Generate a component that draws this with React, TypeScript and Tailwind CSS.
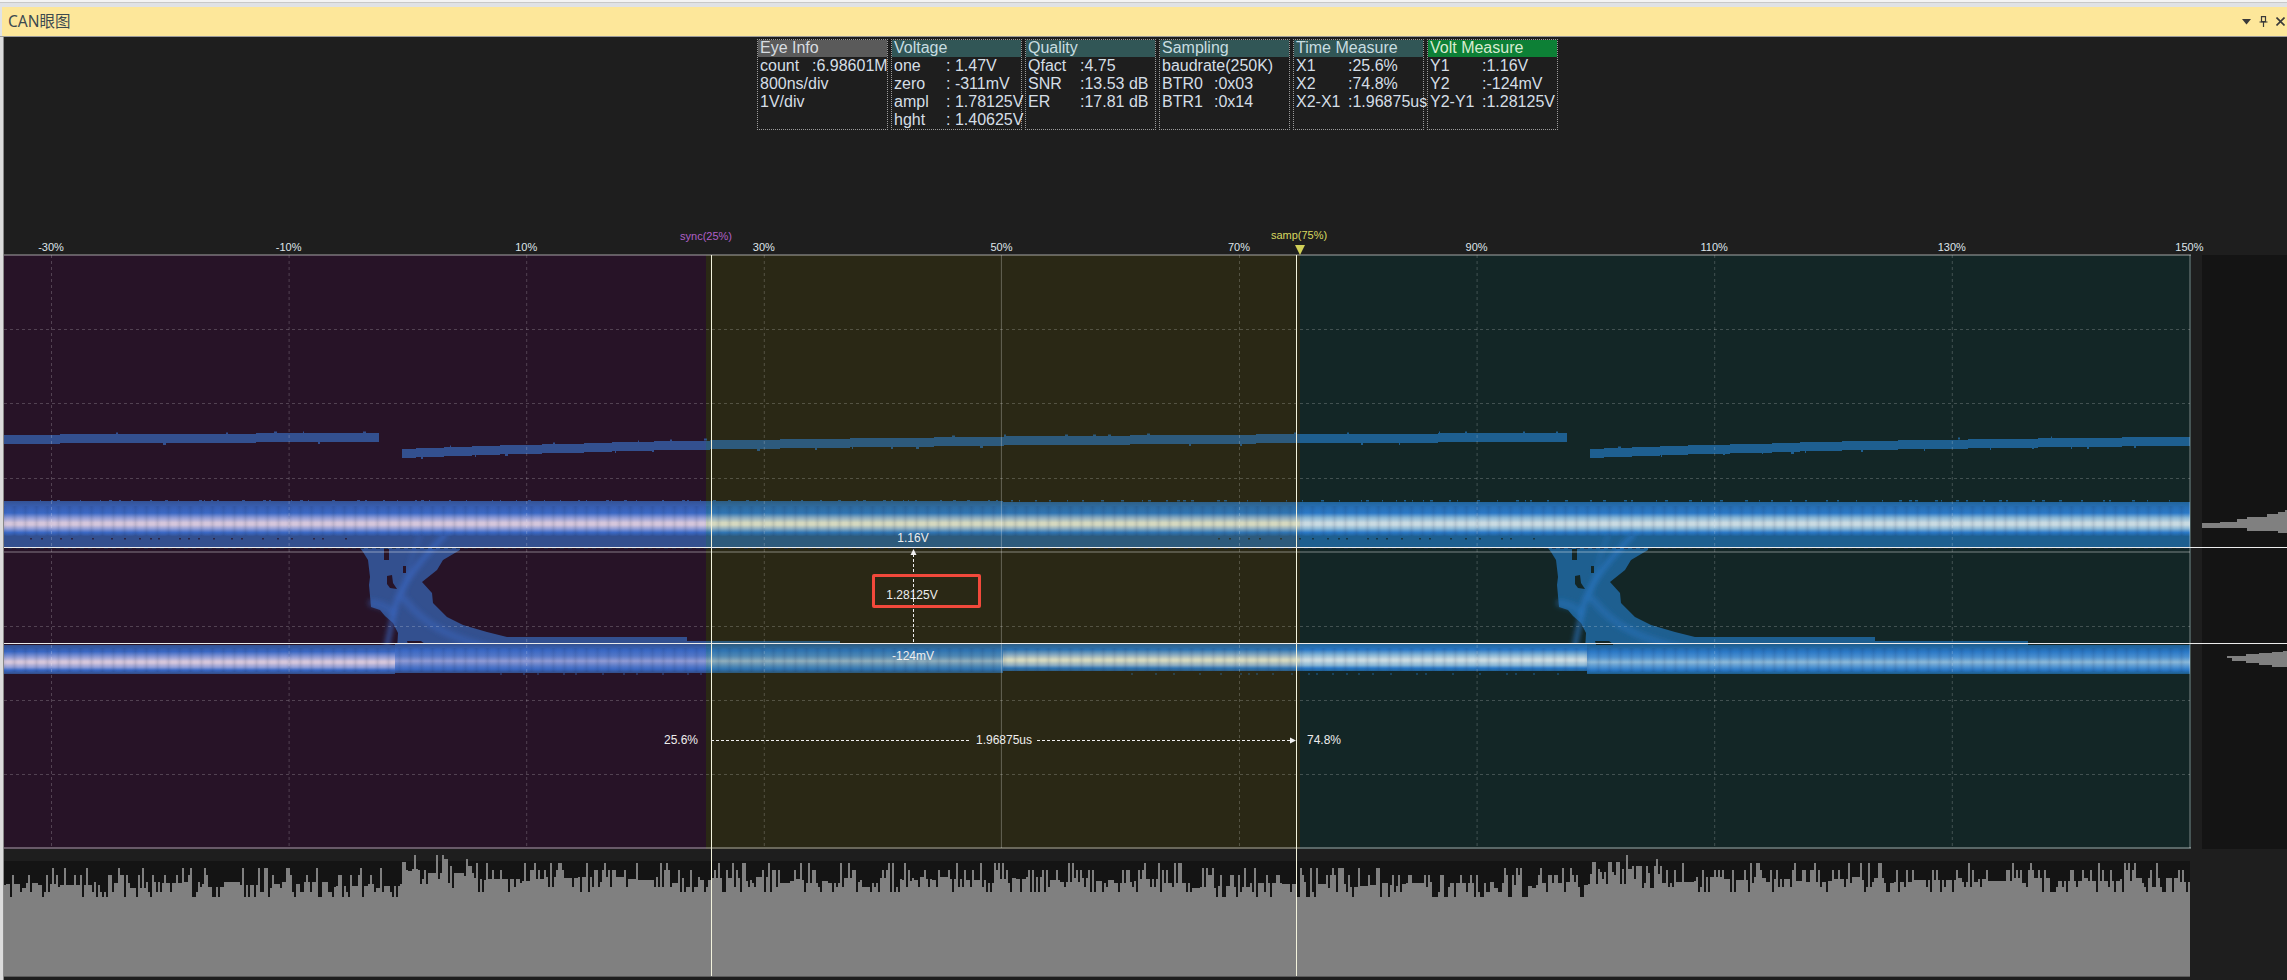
import React from "react";

type Row = [string, string] | [string];
type Box = { title: string; head: string; titleColor: string; rows: Row[] };

const boxes: Box[] = [
  {
    title: "Eye Info",
    head: "bg-[#5a5a5a]",
    titleColor: "text-[#d8dde0]",
    rows: [["count", ":6.98601M"], ["800ns/div"], ["1V/div"]],
  },
  {
    title: "Voltage",
    head: "bg-[#315656]",
    titleColor: "text-[#c8dde0]",
    rows: [["one", ": 1.47V"], ["zero", ": -311mV"], ["ampl", ": 1.78125V"], ["hght", ": 1.40625V"]],
  },
  {
    title: "Quality",
    head: "bg-[#315656]",
    titleColor: "text-[#c8dde0]",
    rows: [["Qfact", ":4.75"], ["SNR", ":13.53 dB"], ["ER", ":17.81 dB"]],
  },
  {
    title: "Sampling",
    head: "bg-[#315656]",
    titleColor: "text-[#c8dde0]",
    rows: [["baudrate(250K)"], ["BTR0", ":0x03"], ["BTR1", ":0x14"]],
  },
  {
    title: "Time Measure",
    head: "bg-[#315656]",
    titleColor: "text-[#c8dde0]",
    rows: [["X1", ":25.6%"], ["X2", ":74.8%"], ["X2-X1", ":1.96875us"]],
  },
  {
    title: "Volt Measure",
    head: "bg-[#0d8036]",
    titleColor: "text-[#d8ecd0]",
    rows: [["Y1", ":1.16V"], ["Y2", ":-124mV"], ["Y2-Y1", ":1.28125V"]],
  },
];

const ruler = [-30, -10, 10, 30, 50, 70, 90, 110, 130, 150];
const pctX = (p: number) => 51 + (p + 30) * 11.88;

// small seeded generator so the noise stays the same on every render
function seeded(seed: number) {
  let s = seed;
  return () => {
    s = (s * 1664525 + 1013904223) % 4294967296;
    return s / 4294967296;
  };
}

const PERIOD = 1188;

const centerTable: [number, number][] = [
  [402, 454], [480, 451], [570, 448.5], [665, 446], [800, 444], [1002, 441.5], [1192, 440], [1300, 439], [1567, 438],
];

function centerAt(p: number) {
  for (let i = 1; i < centerTable.length; i++) {
    const [x0, y0] = centerTable[i - 1];
    const [x1, y1] = centerTable[i];
    if (p <= x1) return y0 + ((p - x0) / (x1 - x0)) * (y1 - y0);
  }
  return 438;
}

function tracePath(x0: number, x1: number, offset: number) {
  const top: string[] = [];
  const bottom: string[] = [];
  for (let x = x0; x < x1; x += 14) {
    const next = Math.min(x + 14, x1);
    const c = Math.round(centerAt(x + offset));
    top.push(`${x},${c - 5} ${next},${c - 5}`);
    bottom.unshift(`${next},${c + 4} ${x},${c + 4}`);
  }
  return `M${top.join(" ")} ${bottom.join(" ")}Z`;
}

const traceD = [tracePath(4, 379, PERIOD), tracePath(402, 1567, 0), tracePath(402 + PERIOD, 2190, -PERIOD)].join(" ");

const ticks = (() => {
  const r = seeded(11);
  const out: { x: number; y: number; w: number; h: number }[] = [];
  // upper band top edge
  for (let x = 40; x < 2185; x += 5 + Math.floor(r() * 22)) out.push({ x, y: 500, w: 1 + Math.floor(r() * 3), h: 1.5 });
  // trace noise
  for (let x = 116; x < 2180; x += 14 + Math.floor(r() * 50)) {
    const inGap = x > 379 && x < 402;
    if (inGap || (x > 1567 && x < 1591)) continue;
    const p = x > 1590 ? x - PERIOD : x < 379 ? x + PERIOD : x;
    const c = Math.round(centerAt(p));
    out.push({ x, y: r() > 0.5 ? c - 6.5 : c + 4, w: 1 + Math.floor(r() * 3), h: 2 });
  }
  // lower band bottom edge
  for (let x = 500; x < 1560; x += 8 + Math.floor(r() * 20)) {
    if (x > 700 && x < 1120) continue;
    out.push({ x, y: 673.5, w: 2, h: 1 });
  }
  return out;
})();

const dots = (() => {
  const r = seeded(5);
  const out: number[] = [];
  for (let x = 30; x < 350; x += 8 + Math.floor(r() * 16)) out.push(x);
  return out;
})();

const histPath = (() => {
  const r = seeded(47);
  let d = "M4,976 ";
  let level = 0;
  for (let x = 4; x < 2190; x += 2) {
    const phase = (x - 4) % PERIOD;
    const base = phase < 396 ? 885 : phase < 440 ? 872 : phase < 470 ? 876 : 880;
    if (r() < 0.25) level = Math.floor(r() * 7) - 3;
    const v = r();
    // a scalloped body, with thin spikes up and thin notches down
    const top = v < 0.1 ? base - 17 : v < 0.24 ? base - 10 : v < 0.35 ? base + 7 : v < 0.47 ? base + 12 : base + level;
    d += `L${x},${top} L${x + 2},${top} `;
  }
  return d + "L2190,976Z";
})();

const eyeShape =
  "M360,548 L363,552 L368,560 L370,577 L369,585 L371,607 L380,610 L385,616 L393,623 L398,633 L397,650 L840,650 L840,641 L687,641 L687,637 L507,637 L487,632 L463,625 L447,617 L433,603 L432,593 L422,582 L437,570 L443,560 L460,550 L460,548Z";

type Palette = {
  id: string;
  bg: string;
  outer: string;
  mid: string;
  light: string;
  inner: string;
  lightDim: string;
  innerDim: string;
  clipX: number;
  clipW: number;
};

const palettes: Palette[] = [
  { id: "p", bg: "#271327", outer: "#33508f", mid: "#3a68c4", light: "#8f9cd6", inner: "#d4c6dc", lightDim: "#5578c8", innerDim: "#8f9ad4", clipX: 4, clipW: 702 },
  { id: "y", bg: "#2a2815", outer: "#2d5a7c", mid: "#2f74b2", light: "#8cacc0", inner: "#d4d8c0", lightDim: "#4f88b4", innerDim: "#90aebc", clipX: 706, clipW: 594 },
  { id: "t", bg: "#132626", outer: "#1e5f90", mid: "#2a78c6", light: "#88b6d6", inner: "#c8dae2", lightDim: "#4b90d0", innerDim: "#8ab8d8", clipX: 1300, clipW: 890 },
];

function EyeBlob({ p, dx }: { p: Palette; dx: number }) {
  return (
    <g transform={`translate(${dx},0)`}>
      <path d={eyeShape} fill={p.outer} />
      <g fill="none" stroke={p.mid} strokeLinecap="round" filter="url(#soft)">
        <path d="M445,535 C420,560 405,580 397,600 C392,620 388,640 384,660" strokeWidth="5" opacity="0.7" />
        <path d="M420,535 C410,560 405,580 402,600" strokeWidth="4" opacity="0.35" />
        <path d="M405,600 C425,625 450,640 510,652" strokeWidth="7" opacity="0.45" />
        <path d="M372,603 Q385,605 392,612" strokeWidth="8" opacity="0.4" />
      </g>
      <path d="M387,576 L392,575 L393,583 L397,589 L390,588 L387,584Z" fill={p.bg} />
      <path d="M403,566 h3 v7 h-3z" fill={p.bg} />
      <path d="M384,549 h5 v11 h-5z" fill={p.bg} />
      <path d="M407,641 h14 l4,3 v4 h-16z" fill={p.bg} />
      {dots.map((x) => (
        <rect key={x} x={x} y="538" width="2" height="1.5" fill={p.bg} opacity="0.7" />
      ))}
    </g>
  );
}

function EyeLayer({ p }: { p: Palette }) {
  const upper = `upper-${p.id}`;
  const lower = `lower-${p.id}`;
  const dim = `dim-${p.id}`;
  return (
    <g clipPath={`url(#clip-${p.id})`}>
      <defs>
        <linearGradient id={upper} gradientUnits="userSpaceOnUse" x1="0" y1="500" x2="0" y2="548">
          <stop offset="0" stopColor={p.outer} />
          <stop offset="0.16" stopColor={p.mid} stopOpacity="0.9" />
          <stop offset="0.27" stopColor={p.mid} />
          <stop offset="0.37" stopColor={p.light} />
          <stop offset="0.47" stopColor={p.inner} />
          <stop offset="0.52" stopColor={p.inner} />
          <stop offset="0.6" stopColor={p.light} />
          <stop offset="0.68" stopColor={p.mid} />
          <stop offset="0.76" stopColor={p.outer} />
          <stop offset="1" stopColor={p.outer} />
        </linearGradient>
        <linearGradient id={lower} gradientUnits="userSpaceOnUse" x1="0" y1="645" x2="0" y2="675">
          <stop offset="0" stopColor={p.outer} />
          <stop offset="0.22" stopColor={p.mid} />
          <stop offset="0.4" stopColor={p.light} />
          <stop offset="0.54" stopColor={p.inner} />
          <stop offset="0.6" stopColor={p.inner} />
          <stop offset="0.74" stopColor={p.light} />
          <stop offset="0.84" stopColor={p.mid} />
          <stop offset="0.95" stopColor={p.outer} />
        </linearGradient>
        <linearGradient id={dim} gradientUnits="userSpaceOnUse" x1="0" y1="645" x2="0" y2="675">
          <stop offset="0" stopColor={p.outer} />
          <stop offset="0.22" stopColor={p.mid} />
          <stop offset="0.4" stopColor={p.lightDim} />
          <stop offset="0.57" stopColor={p.innerDim} />
          <stop offset="0.74" stopColor={p.lightDim} />
          <stop offset="0.84" stopColor={p.mid} />
          <stop offset="0.95" stopColor={p.outer} />
        </linearGradient>
      </defs>

      <path d={traceD} fill={p.outer} />
      {ticks.map((t, i) => (
        <rect key={i} x={t.x} y={t.y} width={t.w} height={t.h} fill={p.outer} />
      ))}

      <rect x="4" y="501" width="999" height="47" fill={`url(#${upper})`} />
      <rect x="1003" y="502" width="1187" height="46" fill={`url(#${upper})`} />

      <EyeBlob p={p} dx={0} />
      <EyeBlob p={p} dx={PERIOD} />

      <rect x="4" y="645" width="391" height="29" fill={`url(#${lower})`} />
      <rect x="395" y="645" width="608" height="29" fill={`url(#${dim})`} transform="translate(0,-1)" />
      <rect x="1003" y="645" width="584" height="28" fill={`url(#${lower})`} transform="translate(0,-2)" />
      <rect x="1587" y="645" width="603" height="29" fill={`url(#${dim})`} />

      <rect x="4" y="506" width="2186" height="30" fill="url(#streaks)" />
      <rect x="4" y="648" width="2186" height="24" fill="url(#streaks)" />
      {/* dark dashes under the upper band */}
      <rect x="4" y="547" width="2186" height="2" fill="url(#dashes)" />
    </g>
  );
}

function ChartOverlay() {
  const vGrid = ruler.slice(0, 9).map(pctX);
  const hGrid = [329, 403, 478, 626, 700, 774];
  return (
    <svg className="absolute top-0 left-0 pointer-events-none" width={2287} height={980} viewBox="0 0 2287 980">
      <defs>
        <filter id="soft" x="-20%" y="-20%" width="140%" height="140%">
          <feGaussianBlur stdDeviation="2.5" />
        </filter>
        <linearGradient id="streakFill" x1="0" y1="0" x2="1" y2="0">
          <stop offset="0" stopColor="#10204a" stopOpacity="0" />
          <stop offset="0.5" stopColor="#10204a" stopOpacity="0.1" />
          <stop offset="1" stopColor="#10204a" stopOpacity="0" />
        </linearGradient>
        <pattern id="streaks" patternUnits="userSpaceOnUse" width="11" height="40">
          <rect x="0" y="0" width="7" height="40" fill="url(#streakFill)" />
        </pattern>
        <pattern id="dashes" patternUnits="userSpaceOnUse" width="8" height="2">
          <rect x="0" y="0" width="4" height="2" fill="#1a2a44" opacity="0.7" />
        </pattern>
        {palettes.map((p) => (
          <clipPath key={p.id} id={`clip-${p.id}`}>
            <rect x={p.clipX} y="255" width={p.clipW} height="593" />
          </clipPath>
        ))}
      </defs>

      {palettes.map((p) => (
        <EyeLayer key={p.id} p={p} />
      ))}

      {/* grid */}
      {vGrid.map((x) =>
        x === pctX(50) ? (
          <line key={x} x1={x} y1="255" x2={x} y2="848" stroke="#fff" strokeOpacity="0.28" />
        ) : (
          <line key={x} x1={x + 0.5} y1="255" x2={x + 0.5} y2="848" stroke="#fff" strokeOpacity="0.2" strokeDasharray="3 3" />
        ),
      )}
      {hGrid.map((y) => (
        <line key={y} x1="4" y1={y + 0.5} x2="2190" y2={y + 0.5} stroke="#fff" strokeOpacity="0.2" strokeDasharray="3 3" />
      ))}
      <line x1="4" y1="552" x2="2190" y2="552" stroke="#fff" strokeOpacity="0.22" strokeWidth="2" />

      {/* plot frame */}
      <line x1="4" y1="255" x2="2191" y2="255" stroke="#fff" strokeOpacity="0.3" strokeWidth="2" />
      <line x1="4" y1="848" x2="2191" y2="848" stroke="#fff" strokeOpacity="0.3" strokeWidth="2" />
      <line x1="2190" y1="255" x2="2190" y2="848" stroke="#fff" strokeOpacity="0.22" strokeWidth="2" />

      {/* bottom histogram */}
      <path d={histPath} fill="#808080" />
      <line x1="4" y1="976.5" x2="2190" y2="976.5" stroke="#5c5c5c" />

      {/* side histogram */}
      <path
        d="M2202,523 H2220 V522 H2237 V519 H2247 V517 H2267 V514 H2278 V512 H2285 V510 H2287 V533 H2278 V531 H2247 V528 H2202Z"
        fill="#808080"
      />
      <path
        d="M2227,656 H2246 V654 H2259 V653 H2272 V652 H2283 V651 H2287 V667 H2272 V665 H2259 V663 H2246 V661 H2232 V658 H2227Z"
        fill="#808080"
      />

      {/* cursors */}
      <line x1="711.5" y1="255" x2="711.5" y2="976" stroke="#f2f2dc" />
      <line x1="1296.5" y1="255" x2="1296.5" y2="976" stroke="#f2f2dc" />
      <line x1="4" y1="547.5" x2="2287" y2="547.5" stroke="#ececec" />
      <line x1="4" y1="643.5" x2="2287" y2="643.5" stroke="#ececec" />
      <polygon points="1295,245 1305,245 1300,255" fill="#d0d058" />

      {/* measure marks */}
      <line x1="913.5" y1="554" x2="913.5" y2="643" stroke="#f0f0f0" strokeDasharray="3 2" />
      <polygon points="910.5,555 916.5,555 913.5,549" fill="#f0f0f0" />
      <line x1="711" y1="740.5" x2="969" y2="740.5" stroke="#f0f0f0" strokeDasharray="3 2" />
      <line x1="1037" y1="740.5" x2="1291" y2="740.5" stroke="#f0f0f0" strokeDasharray="3 2" />
      <polygon points="1290,737.5 1296,740.5 1290,743.5" fill="#f0f0f0" />
    </svg>
  );
}

function InfoBox({ box }: { box: Box }) {
  return (
    <div className="w-[131px] h-[91px] border border-dotted border-[#9c9c9c] text-[16px] leading-[18px] text-[#d5dee6] whitespace-nowrap">
      <div className={`h-[17px] leading-[15px] px-[2px] ${box.head} ${box.titleColor}`}>{box.title}</div>
      {box.rows.map((row) => (
        <div key={row[0]} className="flex h-[18px] px-[2px]">
          {row.length === 2 ? (
            <>
              <span className="w-[52px] shrink-0">{row[0]}</span>
              <span>{row[1]}</span>
            </>
          ) : (
            <span>{row[0]}</span>
          )}
        </div>
      ))}
    </div>
  );
}

export default function App() {
  return (
    <div className="relative w-[2287px] h-[980px] overflow-hidden bg-[#1e1e1e] font-['Liberation_Sans',Arial,sans-serif] flex flex-col">
      <div className="h-[2px] bg-[#f4f4f4]" />
      <div className="h-px bg-[#c8c8c8]" />
      <div className="h-1 bg-[#e0e2e5]" />
      <div className="flex h-[29px] items-center justify-between border-l-2 border-[#e0e2e5] bg-[#fde79a] pl-[6px] pr-[2px]">
        <span className="font-['Noto_Sans','Noto_Sans_CJK_SC',sans-serif] text-[15.5px] text-[#3c4a50]">CAN眼图</span>
        <div className="flex items-center gap-[8px]">
          <svg width="9" height="6" viewBox="0 0 9 6">
            <polygon points="0,0 9,0 4.5,5.5" fill="#3a3a3a" />
          </svg>
          <svg width="9" height="11" viewBox="0 0 9 11" fill="none" stroke="#3a3a3a" strokeWidth="1.2">
            <path d="M2.5 0.6h4v5h-4z" />
            <path d="M0.5 6h8M4.5 6v5" />
          </svg>
          <svg width="9" height="9" viewBox="0 0 9 9" stroke="#3a3a3a" strokeWidth="1.6">
            <path d="M0.5 0.5l8 8M8.5 0.5l-8 8" />
          </svg>
        </div>
      </div>
      <div className="h-px bg-[#9a9a9a]" />

      <div className="flex flex-1 min-h-0">
        <div className="w-[3px] bg-[#dcdcdc]" />
        <div className="w-px bg-[#8a8a8a]" />
        <div className="flex flex-1 flex-col min-w-0">
          <div className="flex h-[218px] gap-[3px] pl-[753px] pt-[2px] items-start">
            {boxes.map((b) => (
              <InfoBox key={b.title} box={b} />
            ))}
          </div>

          <div className="flex h-[594px]">
            <div className="flex w-[2187px]">
              <div className="w-[702px] bg-[#271327]" />
              <div className="w-[594px] bg-[#2a2815]" />
              <div className="flex-1 bg-[#132626]" />
            </div>
            <div className="w-[11px]" />
            <div className="flex-1 bg-[#141414]" />
          </div>

          <div className="mt-[12px] h-[115px] w-[2186px] bg-[#141414]" />
        </div>
      </div>

      <ChartOverlay />

      {/* ruler text */}
      {ruler.map((p) => (
        <span
          key={p}
          className="absolute top-[240px] -translate-x-1/2 text-[11px] leading-[14px] text-[#dfe5ea] whitespace-nowrap"
          style={{ left: pctX(p) }}
        >
          {p}%
        </span>
      ))}
      <span className="absolute left-[706px] top-[229px] -translate-x-1/2 text-[11px] leading-[14px] text-[#b060c8]">sync(25%)</span>
      <span className="absolute left-[1299px] top-[228px] -translate-x-1/2 text-[11px] leading-[14px] text-[#d8d860]">samp(75%)</span>

      {/* measure labels */}
      <span className="absolute left-[913px] top-[531px] -translate-x-1/2 text-[12px] leading-[14px] text-[#eeeeee]">1.16V</span>
      <span className="absolute left-[913px] top-[649px] -translate-x-1/2 text-[12px] leading-[14px] text-[#eeeeee]">-124mV</span>
      <span className="absolute left-[912px] top-[588px] -translate-x-1/2 text-[12px] leading-[14px] text-[#eeeeee]">1.28125V</span>
      <span className="absolute left-[681px] top-[733px] -translate-x-1/2 text-[12px] leading-[14px] text-[#eeeeee]">25.6%</span>
      <span className="absolute left-[1004px] top-[733px] -translate-x-1/2 text-[12px] leading-[14px] text-[#eeeeee]">1.96875us</span>
      <span className="absolute left-[1324px] top-[733px] -translate-x-1/2 text-[12px] leading-[14px] text-[#eeeeee]">74.8%</span>

      {/* annotation box */}
      <div className="absolute left-[872px] top-[574px] h-[34px] w-[109px] rounded-[2px] border-[3px] border-[#f2493b]" />
    </div>
  );
}
